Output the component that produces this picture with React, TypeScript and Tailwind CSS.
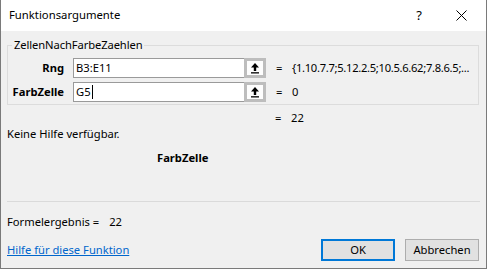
import React from 'react';

const font = { fontFamily: '"Noto Sans", "Liberation Sans", sans-serif' };

function RefButton() {
    return (
        <div className="flex h-[20px] w-[22px] items-center justify-center border-[3px] border-[#bdbdbd] bg-[#fdfdfd]">
            <svg width="10" height="12" viewBox="0 0 10 12">
                <path d="M5 1 L9 5.5 L6.2 5.5 L6.2 9 L3.8 9 L3.8 5.5 L1 5.5 Z" fill="#000" />
                <rect x="1" y="10.2" width="8" height="1.3" fill="#000" />
            </svg>
        </div>
    );
}

function ArgRow({ label, value, result, caret }: { label: string; value: string; result: string; caret?: boolean }) {
    return (
        <div className="flex h-[20px] items-center">
            <div className="w-[56px] text-right font-bold">{label}</div>
            <div className="ml-[9px] flex h-[20px] w-[171px] items-center border border-[#9a9a9a] border-r-0 bg-white pl-[2px]">
                <span>{value}</span>
                {caret && <span className="ml-px h-[14px] w-px bg-black" />}
            </div>
            <RefButton />
            <div className="ml-[10px] w-[16px]">=</div>
            <div className="whitespace-nowrap tracking-[-0.3px]">{result}</div>
        </div>
    );
}

export default function App() {
    return (
        <div style={font} className="flex h-[269px] w-[487px] flex-col border-x border-b border-[#7a7a7a] bg-[#f0f0f0] text-black">
            {/* title bar */}
            <div className="flex h-[31px] shrink-0 items-center bg-white pl-[8px]">
                <span className="text-[11.3px]">Funktionsargumente</span>
                <span className="ml-auto text-[13px]">?</span>
                <svg className="ml-[34px] mr-[19px]" width="11" height="11" viewBox="0 0 11 11">
                    <path d="M0.5 0.5 L10.5 10.5 M10.5 0.5 L0.5 10.5" stroke="#000" strokeWidth="1" />
                </svg>
            </div>

            <div className="flex flex-1 flex-col px-[6px] text-[11.2px]">
                <fieldset className="mt-[6px] mr-px border border-[#dcdcdc] px-0 pt-[5px] pb-[2px]">
                    <legend className="ml-[4px] px-[2px] leading-[16px] tracking-[-0.1px]">ZellenNachFarbeZaehlen</legend>
                    <div className="flex flex-col gap-[4px]">
                        <ArgRow label="Rng" value="B3:E11" result="{1.10.7.7;5.12.2.5;10.5.6.62;7.8.6.5;..." />
                        <ArgRow label="FarbZelle" value="G5" result="0" caret />
                    </div>
                </fieldset>

                <div className="mt-[6px] flex h-[15px] items-center pl-[268px]">
                    <span className="w-[16px]">=</span>
                    <span>22</span>
                </div>
                <div className="h-[16px] leading-[16px]">Keine Hilfe verfügbar.</div>
                <div className="mt-[8px] h-[16px] pl-[150px] font-bold leading-[16px]">FarbZelle</div>

                <div className="mt-[35px] h-px w-[473px] bg-[#dadada]" />

                <div className="mt-[12px] h-[16px] leading-[16px]">
                    Formelergebnis =<span className="ml-[10px]">22</span>
                </div>

                <div className="mt-[9px] flex items-center">
                    <a href="#" className="text-[#0066cc] underline">Hilfe für diese Funktion</a>
                    <button className="ml-auto h-[22px] w-[74px] border-2 border-[#0078d7] bg-[#e1e1e1]">OK</button>
                    <button className="ml-[10px] mr-px h-[22px] w-[74px] border border-[#adadad] bg-[#e1e1e1]">Abbrechen</button>
                </div>
            </div>
        </div>
    );
}
